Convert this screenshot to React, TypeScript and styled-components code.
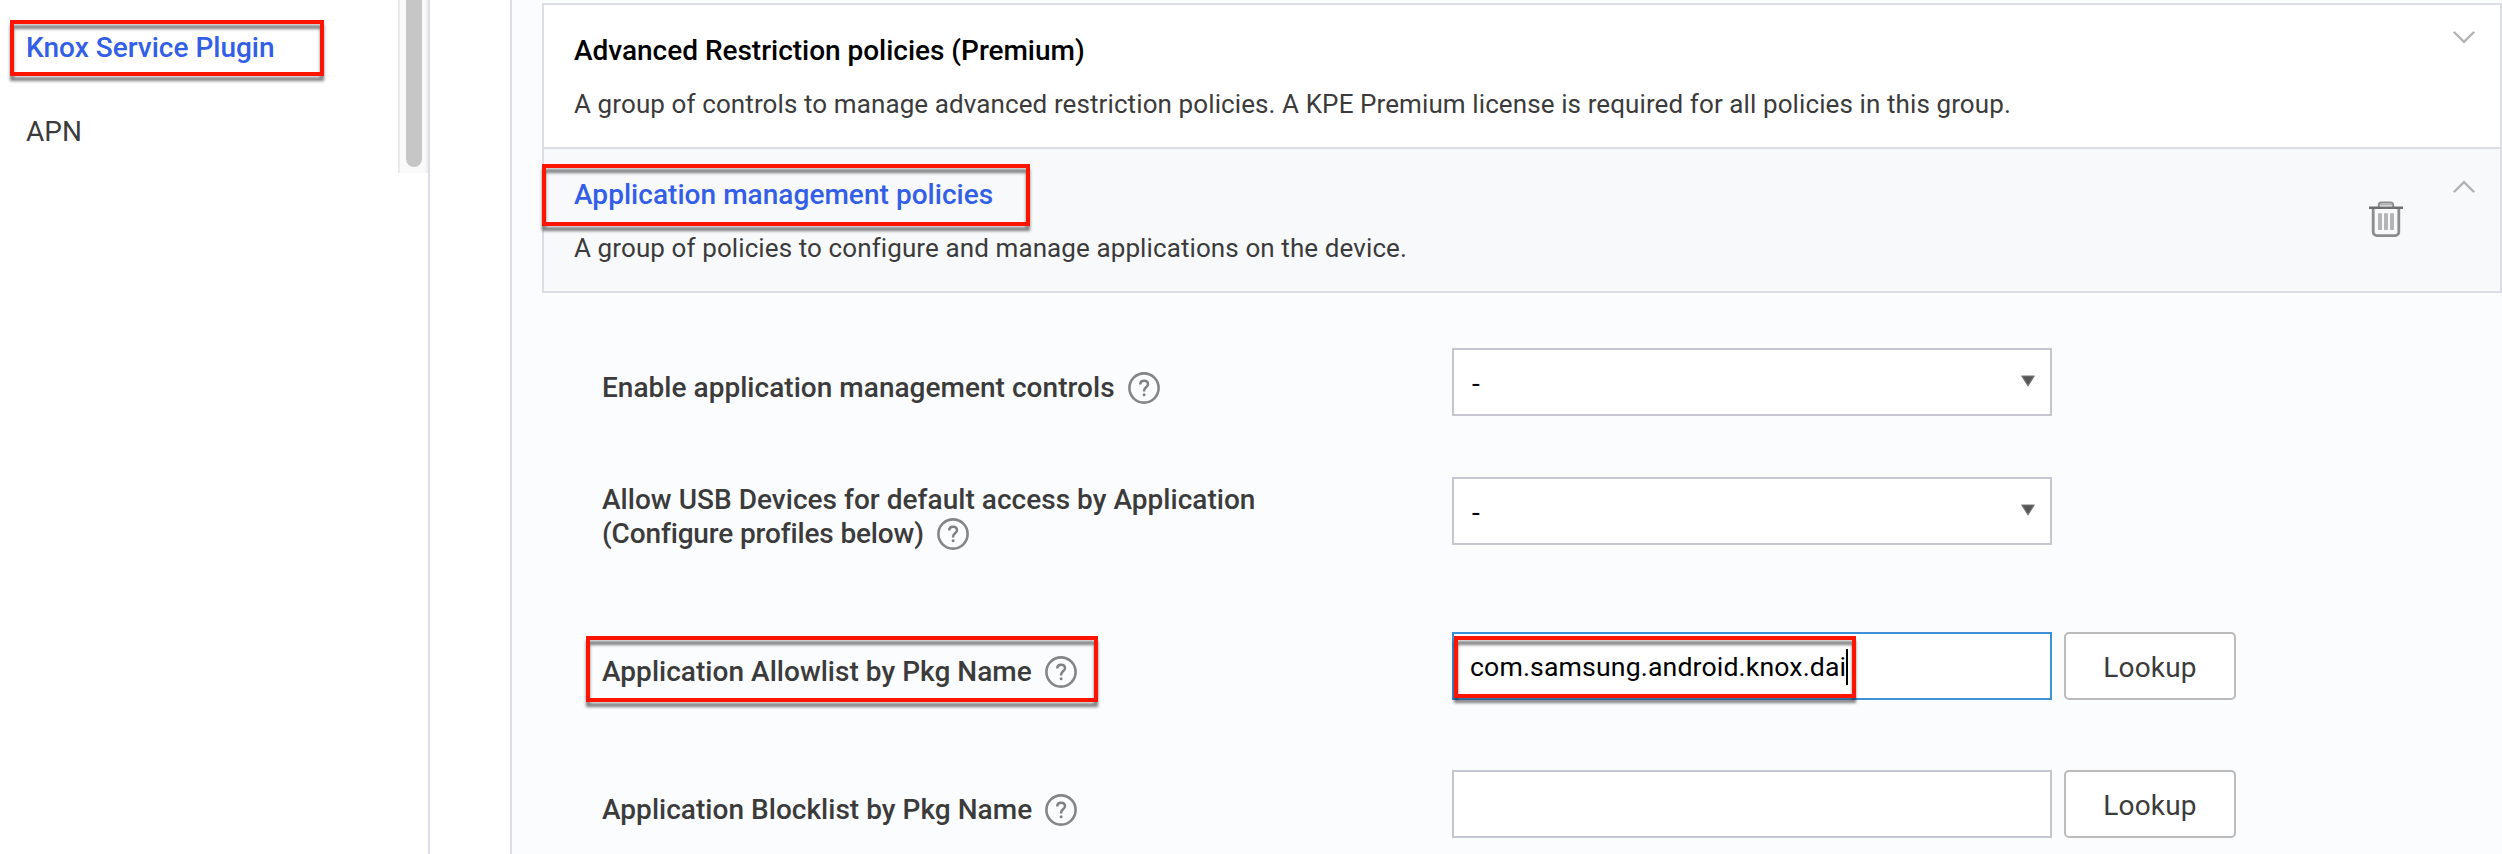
import React from "react";
import styled, { createGlobalStyle, css } from "styled-components";

const GlobalStyle = createGlobalStyle`
  *, *::before, *::after { box-sizing: border-box; }
  body {
    margin: 0;
    background: #fff;
    color: #3b3b3b;
    font-family: Roboto, "Liberation Sans", sans-serif;
    font-size: 28px;
    line-height: 34px;
    overflow: hidden;
  }
`;

const Page = styled.div`
  display: flex;
  height: 854px;
  overflow: hidden;
`;

const Sidebar = styled.aside`
  display: flex;
  align-items: flex-start;
  width: 430px;
  flex: none;
  border-right: 2px solid #dddde6;
`;

const NavList = styled.nav`
  flex: 1;
  padding-top: 6px;
`;

const NavItem = styled.a<{ $active?: boolean }>`
  position: relative;
  display: flex;
  align-items: center;
  height: 84px;
  padding-left: 26px;
  color: ${(p) => (p.$active ? "#335ee6" : "#3b3b3b")};
  font-weight: ${(p) => (p.$active ? 500 : 400)};
`;

const ScrollTrack = styled.div`
  width: 30px;
  height: 173px;
  padding: 0 4px 6px 6px;
  background: #fafafa;
  border-left: 2px solid #e9e9e9;
  border-right: 2px solid #efefef;
`;

const ScrollThumb = styled.div`
  width: 16px;
  height: 167px;
  border-radius: 0 0 8px 8px;
  background: #c6c6c6;
`;

const Main = styled.main`
  flex: 1;
  margin-left: 80px;
  padding: 3px 0 0 30px;
  border-left: 2px solid #dddde6;
  background: #fbfcfe;
`;

const Accordion = styled.div`
  border: 2px solid #dddde6;
`;

const Section = styled.section<{ $open?: boolean }>`
  display: flex;
  align-items: flex-start;
  height: 142px;
  padding: 29px 26px 0 30px;
  background: ${(p) => (p.$open ? "#f8f9fb" : "#fff")};

  & + & {
    height: 144px;
    border-top: 2px solid #dddde6;
  }
`;

const SectionText = styled.div`
  flex: 1;
`;

const SectionTitle = styled.h3<{ $open?: boolean }>`
  position: relative;
  margin: 0 0 19px;
  font-size: 28px;
  font-weight: 500;
  letter-spacing: ${(p) => (p.$open ? "0.04px" : "-0.02px")};
  color: ${(p) => (p.$open ? "#335ee6" : "#000")};
`;

const SectionDescription = styled.p`
  margin: 0;
  font-size: 26px;
  letter-spacing: 0.1px;
`;

const TrashSvg = styled.svg`
  flex: none;
  width: 36px;
  height: 38px;
  margin: 22px 49px 0 0;
`;

const ChevronSvg = styled.svg<{ $up?: boolean }>`
  flex: none;
  width: 22px;
  height: 13px;
  margin: ${(p) => (p.$up ? "2px" : "-3px")} -1px 0 0;
  ${(p) => p.$up && css`transform: rotate(180deg);`}
`;

const Form = styled.form`
  display: flex;
  flex-direction: column;
  padding: 55px 0 0 60px;
`;

const Row = styled.div<{ $gap?: number }>`
  display: flex;
  height: 68px;
  margin-bottom: ${(p) => p.$gap ?? 0}px;
`;

const Label = styled.label<{ $top: number }>`
  position: relative;
  width: 850px;
  flex: none;
  padding-top: ${(p) => p.$top}px;
  font-weight: 500;
  letter-spacing: 0.03px;
  white-space: nowrap;
`;

const LabelNote = styled.span`
  display: block;
  letter-spacing: -0.14px;
`;

const HelpSvg = styled.svg`
  width: 32px;
  height: 32px;
  margin: -6px 0 -6px 13px;
  vertical-align: -5px;
  transform: translateY(-4px);
`;

const Field = styled.div<{ $focused?: boolean }>`
  position: relative;
  display: flex;
  align-items: center;
  width: 600px;
  height: 68px;
  border: 2px solid ${(p) => (p.$focused ? "#3c90d3" : "#c6c6d3")};
  background: #fff;
  color: #000;
`;

const SelectField = styled(Field)`
  justify-content: space-between;
  padding: 0 14px 0 18px;
`;

const SelectValue = styled.span`
  padding-top: 3px;
`;

const ArrowSvg = styled.svg`
  width: 16px;
  height: 12px;
  margin-bottom: 2px;
`;

const InputField = styled(Field)`
  padding: 2px 16px 0;
`;

const InputValue = styled.span`
  font-size: 26.67px;
  letter-spacing: 0.13px;
`;

const Caret = styled.i`
  width: 2px;
  height: 36px;
  background: #000;
`;

const LookupButton = styled.button`
  width: 172px;
  height: 68px;
  margin-left: 12px;
  padding: 3px 0 0;
  border: 2px solid #bbb;
  border-radius: 5px;
  background: #fff;
  color: #3b3b3b;
  font: inherit;
  letter-spacing: 0.2px;
`;

const Highlight = styled.span<{ $x: number; $y: number; $w: number; $h: number }>`
  position: absolute;
  left: ${(p) => p.$x}px;
  top: ${(p) => p.$y}px;
  width: ${(p) => p.$w}px;
  height: ${(p) => p.$h}px;
  border: 4px solid #ff1400;
  filter: drop-shadow(0 5px 1.5px rgba(0, 0, 0, 0.5));
  pointer-events: none;
  z-index: 1;
`;

const Help = () => (
  <HelpSvg viewBox="0 0 32 32" fill="none">
    <circle cx="16" cy="16" r="14.6" stroke="#858587" strokeWidth="2.6" />
    <path
      d="M12.2 12.6c0-2.5 1.6-3.9 3.9-3.9s3.9 1.4 3.9 3.5c0 3-3.9 3.2-3.9 6.2v1.2"
      stroke="#808082"
      strokeWidth="2.5"
    />
    <circle cx="16.1" cy="22.8" r="1.5" fill="#808082" />
  </HelpSvg>
);

const Chevron = ({ up }: { up?: boolean }) => (
  <ChevronSvg $up={up} viewBox="0 0 22 13" fill="none">
    <path d="M1.5 1.5 11 10.8l9.5-9.3" stroke="#b2b2b3" strokeWidth="2.4" strokeLinecap="round" />
  </ChevronSvg>
);

const Trash = () => (
  <TrashSvg viewBox="0 0 36 38" fill="none">
    <path d="M10.8 8V5a2.5 2.5 0 0 1 2.500-2.500h9.400a2.500 2.500 0 0 1 2.500 2.500v3" stroke="#8c8c8d" strokeWidth="2" />
    <path d="M12 3.5h12v2H12z" fill="#b0b0b1" />
    <path d="M5.200 8.500v23.500a3.600 3.600 0 0 0 3.600 3.600h18.400a3.600 3.600 0 0 0 3.600-3.600V8.500" stroke="#8c8c8d" strokeWidth="2.800" />
    <path d="M1 7.8h34" stroke="#6f6f70" strokeWidth="2.400" />
    <path d="M12 13.300v16.700M18 13.300v16.700M24 13.300v16.700" stroke="#b5b5b7" strokeWidth="4" />
  </TrashSvg>
);

const Arrow = () => (
  <ArrowSvg viewBox="0 0 16 12">
    <path d="M1.800 1h12.400L8 10.800z" fill="#555" stroke="#777" strokeWidth="1.200" strokeLinejoin="round" />
  </ArrowSvg>
);

export default function App() {
  return (
    <>
      <GlobalStyle />
      <Page>
        <Sidebar>
          <NavList>
            <NavItem $active>
              Knox Service Plugin
              <Highlight $x={10} $y={14} $w={314} $h={56} />
            </NavItem>
            <NavItem>APN</NavItem>
          </NavList>
          <ScrollTrack>
            <ScrollThumb />
          </ScrollTrack>
        </Sidebar>
        <Main>
          <Accordion>
            <Section>
              <SectionText>
                <SectionTitle>Advanced Restriction policies (Premium)</SectionTitle>
                <SectionDescription>
                  A group of controls to manage advanced restriction policies. A KPE Premium license is
                  required for all policies in this group.
                </SectionDescription>
              </SectionText>
              <Chevron />
            </Section>
            <Section $open>
              <SectionText>
                <SectionTitle $open>
                  Application management policies
                  <Highlight $x={-32} $y={-14} $w={488} $h={62} />
                </SectionTitle>
                <SectionDescription>
                  A group of policies to configure and manage applications on the device.
                </SectionDescription>
              </SectionText>
              <Trash />
              <Chevron up />
            </Section>
          </Accordion>
          <Form>
            <Row $gap={61}>
              <Label $top={23}>
                Enable application management controls
                <Help />
              </Label>
              <SelectField>
                <SelectValue>-</SelectValue>
                <Arrow />
              </SelectField>
            </Row>
            <Row $gap={87}>
              <Label $top={6}>
                Allow USB Devices for default access by Application
                <LabelNote>
                  (Configure profiles below)
                  <Help />
                </LabelNote>
              </Label>
              <SelectField>
                <SelectValue>-</SelectValue>
                <Arrow />
              </SelectField>
            </Row>
            <Row $gap={70}>
              <Label $top={23}>
                Application Allowlist by Pkg Name
                <Help />
                <Highlight $x={-16} $y={4} $w={512} $h={66} />
              </Label>
              <InputField $focused>
                <InputValue>com.samsung.android.knox.dai</InputValue>
                <Caret />
                <Highlight $x={0} $y={2} $w={402} $h={62} />
              </InputField>
              <LookupButton type="button">Lookup</LookupButton>
            </Row>
            <Row>
              <Label $top={23}>
                Application Blocklist by Pkg Name
                <Help />
              </Label>
              <InputField />
              <LookupButton type="button">Lookup</LookupButton>
            </Row>
          </Form>
        </Main>
      </Page>
    </>
  );
}
